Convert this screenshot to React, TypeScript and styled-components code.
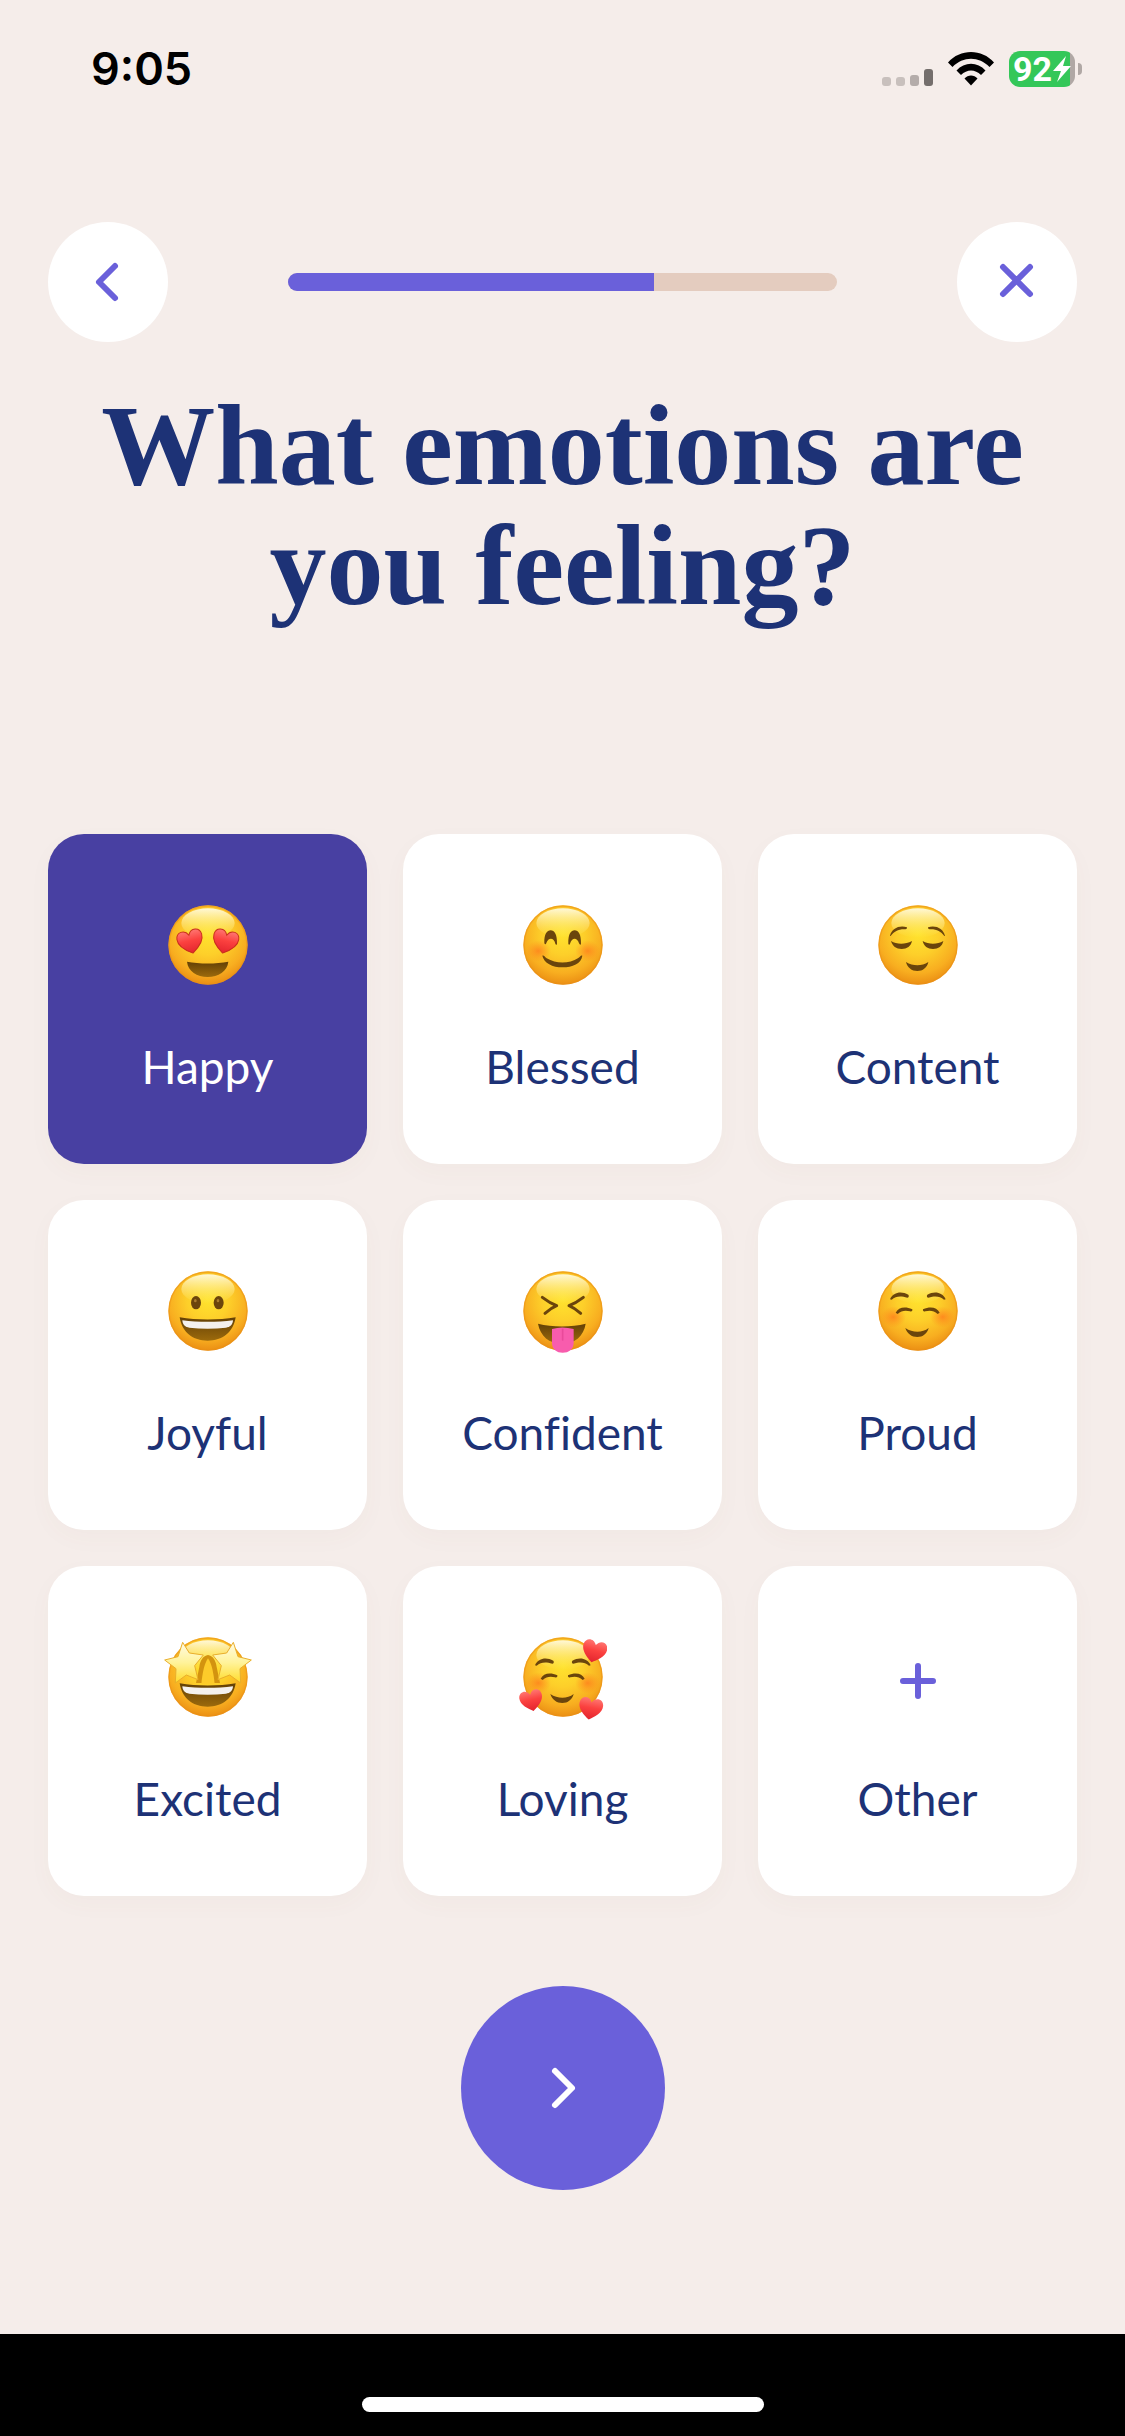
import React, { useState } from "react";
import styled, { createGlobalStyle } from "styled-components";

const color = {
  page: "#f5edea",
  card: "#ffffff",
  accent: "#6a60da",
  selected: "#4840a2",
  navy: "#1d3276",
  track: "#e4ccbf",
};

const GlobalStyle = createGlobalStyle`
  *, *::before, *::after { box-sizing: border-box; }
  body { margin: 0; background: ${color.page}; }
  button { border: 0; padding: 0; margin: 0; cursor: pointer; font: inherit; }
  svg { display: block; }
`;

const Screen = styled.div`
  display: flex;
  flex-direction: column;
  min-height: 100vh;
  background: ${color.page};
  color: ${color.navy};
  font-family: Lato, "Open Sans", sans-serif;
`;

const StatusBar = styled.header`
  display: flex;
  align-items: center;
  justify-content: space-between;
  height: 138px;
  padding: 0 43px 0 91px;
  color: #000;
`;

const Clock = styled.time`
  font-family: Inter, "Liberation Sans", sans-serif;
  font-size: 45px;
  font-weight: 600;
  line-height: 56px;
`;

const StatusIcons = styled.div`
  display: flex;
  align-items: center;
  gap: 15px;
`;

const Battery = styled.div`
  display: flex;
  align-items: center;
  gap: 3px;
`;

const BatteryBody = styled.div`
  display: flex;
  align-items: center;
  justify-content: center;
  gap: 1px;
  width: 66px;
  height: 36px;
  border-radius: 11px;
  background: linear-gradient(90deg, #34c759 61px, #b0a8a5 61px);
  color: #fff;
  font-family: Roboto, "Liberation Sans", sans-serif;
  font-size: 34px;
  font-weight: 700;
  line-height: 36px;
`;

const BatteryTip = styled.div`
  width: 4px;
  height: 12px;
  border-radius: 0 4px 4px 0;
  background: #b0a8a5;
`;

const Content = styled.main`
  display: flex;
  flex: 1;
  flex-direction: column;
  padding: 84px 48px 144px;
`;

const TopNav = styled.nav`
  display: flex;
  align-items: center;
  gap: 120px;
`;

const RoundButton = styled.button<{ $size: number; $primary?: boolean }>`
  display: flex;
  flex: none;
  align-items: center;
  justify-content: center;
  width: ${(p) => p.$size}px;
  height: ${(p) => p.$size}px;
  border-radius: 50%;
  background: ${(p) => (p.$primary ? color.accent : color.card)};
  color: ${(p) => (p.$primary ? "#fff" : color.accent)};
`;

const Track = styled.div`
  flex: 1;
  height: 18px;
  overflow: hidden;
  border-radius: 9px;
  background: ${color.track};
`;

const TrackFill = styled.div`
  height: 100%;
  background: ${color.accent};
`;

const Title = styled.h1`
  margin: 44px 0 208px;
  font-family: "Liberation Serif", "Times New Roman", serif;
  font-size: 114px;
  font-weight: 700;
  line-height: 120px;
  text-align: center;
`;

const Grid = styled.div`
  display: grid;
  grid-template-columns: repeat(3, 1fr);
  gap: 36px;
`;

const Card = styled.button<{ $selected: boolean }>`
  display: flex;
  flex-direction: column;
  align-items: center;
  gap: 50px;
  padding: 67px 0 69px;
  border-radius: 36px;
  background: ${(p) => (p.$selected ? color.selected : color.card)};
  color: ${(p) => (p.$selected ? "#fff" : color.navy)};
  box-shadow: 0 8px 24px rgba(120, 90, 60, 0.03);
`;

const CardLabel = styled.span`
  font-size: 46px;
  font-variant-ligatures: none;
  line-height: 56px;
`;

const Actions = styled.div`
  display: flex;
  justify-content: center;
  margin-top: 90px;
`;

const HomeArea = styled.footer`
  display: flex;
  align-items: flex-end;
  justify-content: center;
  height: 102px;
  padding-bottom: 24px;
  background: #000;
`;

const HomeIndicator = styled.div`
  width: 402px;
  height: 15px;
  border-radius: 8px;
  background: #fff;
`;

const BROWN = "#6b450c";

function Face({ id, children }: { id: string; children: React.ReactNode }) {
  return (
    <svg width="88" height="88" viewBox="72 66 264 264" aria-hidden="true">
      <defs>
        <radialGradient id={`${id}-skin`} cx="0.5" cy="0.36" r="0.66">
          <stop offset="0" stopColor="#ffe32e" />
          <stop offset="0.4" stopColor="#fdcf2a" />
          <stop offset="0.75" stopColor="#f8ae20" />
          <stop offset="1" stopColor="#e98a12" />
        </radialGradient>
        <linearGradient id={`${id}-shine`} x1="0" y1="0" x2="0" y2="1">
          <stop offset="0" stopColor="#fffbe0" stopOpacity="0.95" />
          <stop offset="1" stopColor="#fff27a" stopOpacity="0" />
        </linearGradient>
        <radialGradient id={`${id}-blush`}>
          <stop offset="0" stopColor="#ff7a1c" stopOpacity="0.75" />
          <stop offset="1" stopColor="#ff8a1c" stopOpacity="0" />
        </radialGradient>
        <linearGradient id={`${id}-heart`} x1="0" y1="0" x2="0" y2="1">
          <stop offset="0" stopColor="#ff7672" />
          <stop offset="0.45" stopColor="#fb413f" />
          <stop offset="1" stopColor="#e3242e" />
        </linearGradient>
        <linearGradient id={`${id}-mouth`} x1="0" y1="0" x2="0" y2="1">
          <stop offset="0" stopColor="#634006" />
          <stop offset="1" stopColor="#9c6a0c" />
        </linearGradient>
        <linearGradient id={`${id}-star`} x1="0" y1="0" x2="0" y2="1">
          <stop offset="0" stopColor="#fffbe6" />
          <stop offset="0.5" stopColor="#fff39a" />
          <stop offset="1" stopColor="#ffdb28" />
        </linearGradient>
      </defs>
      <circle cx="204" cy="198" r="119" fill={`url(#${id}-skin)`} />
      <circle cx="204" cy="198" r="117" fill="none" stroke="#e98f16" strokeWidth="4" strokeOpacity="0.55" />
      <ellipse cx="204" cy="132" rx="80" ry="44" fill={`url(#${id}-shine)`} />
      {children}
    </svg>
  );
}

const HEART = "M0 36 C-16 26 -40 8 -38 -14 C-36 -36 -10 -40 0 -19 C10 -40 36 -36 38 -14 C40 8 16 26 0 36Z";

function Heart({ id, x, y, rotate, scale = 1, edge }: { id: string; x: number; y: number; rotate: number; scale?: number; edge?: string }) {
  return (
    <path
      d={HEART}
      transform={`translate(${x} ${y}) rotate(${rotate}) scale(${scale})`}
      fill={`url(#${id}-heart)`}
      stroke={edge}
      strokeWidth="3"
    />
  );
}

function Blush({ id }: { id: string }) {
  return (
    <>
      <ellipse cx="130" cy="216" rx="38" ry="32" fill={`url(#${id}-blush)`} />
      <ellipse cx="278" cy="216" rx="38" ry="32" fill={`url(#${id}-blush)`} />
    </>
  );
}

function Grin({ id }: { id: string }) {
  return (
    <>
      <path d="M119 217 C170 226 236 226 287 217 C280 262 248 287 203 287 C158 287 126 262 119 217Z" fill={`url(#${id}-mouth)`} />
      <path d="M127 226 C174 232 232 232 279 226 C278 240 270 247 258 248 C222 252 184 252 148 248 C136 247 128 240 127 226Z" fill="#f4f1ee" />
    </>
  );
}

/* Raised brows, closed eyes and the small smile shared by the calm faces. */
function SoftSmile() {
  return (
    <g fill={BROWN}>
      <path d="M120 163 C130 141 154 138 175 149 C178 153 176 158 172 158 C150 151 137 154 125 164Z" />
      <path d="M287 163 C277 141 253 138 232 149 C229 153 231 158 235 158 C257 151 270 154 282 164Z" />
      <path d="M137 203 C145 187 165 183 187 193 C188 198 185 201 180 199 C164 195 154 198 143 207Z" />
      <path d="M269 203 C261 187 241 183 219 193 C218 198 221 201 226 199 C242 195 252 198 263 207Z" />
      <path d="M166 249 C188 264 217 264 236 249 C232 266 218 276 202 276 C185 276 171 266 166 249Z" />
    </g>
  );
}

const faces: Record<string, React.ReactNode> = {
  happy: (
    <Face id="happy">
      <Heart id="happy" x={151} y={187} rotate={-13} edge="#c9301d" />
      <Heart id="happy" x={256} y={187} rotate={13} edge="#c9301d" />
      <path d="M141 248 C178 255 228 255 265 248 C262 277 235 294 203 294 C171 294 144 277 141 248Z" fill="url(#happy-mouth)" />
    </Face>
  ),
  blessed: (
    <Face id="blessed">
      <Blush id="blessed" />
      <path d="M148 192 C147 165 156 154 167 154 C178 154 187 166 186 195 C185 199 182 198 181 194 C177 175 160 174 154 192 C153 197 149 197 148 192Z" fill={BROWN} />
      <path d="M220 194 C219 165 228 154 239 154 C250 154 259 166 258 195 C257 199 254 198 252 193 C247 175 231 174 225 194 C224 198 221 198 220 194Z" fill={BROWN} />
      <path d="M142 230 C147 228 150 234 155 238 C184 255 222 255 250 237 C255 233 258 227 262 230 C259 254 232 265 203 265 C172 265 147 252 142 230Z" fill={BROWN} />
    </Face>
  ),
  content: (
    <Face id="content">
      <g fill={BROWN}>
        <path d="M120 171 C125 148 148 138 171 145 C171 151 168 151 162 151 C144 151 132 158 122 171Z" />
        <path d="M285 171 C280 148 257 138 234 145 C234 151 237 151 243 151 C261 151 273 158 283 171Z" />
        <path d="M123 186 C140 197 166 197 186 186 C183 202 171 210 155 210 C139 210 127 201 123 186Z" />
        <path d="M218 186 C236 197 262 197 280 186 C277 202 265 210 249 210 C233 210 221 201 218 186Z" />
        <path d="M168 249 C189 262 215 262 235 249 C232 266 218 276 202 276 C185 276 172 266 168 249Z" />
      </g>
    </Face>
  ),
  joyful: (
    <Face id="joyful">
      <ellipse cx="168" cy="173" rx="15" ry="20" fill={BROWN} />
      <ellipse cx="236" cy="173" rx="15" ry="20" fill={BROWN} />
      <ellipse cx="166" cy="167" rx="4" ry="5" fill="#a97b2e" />
      <ellipse cx="234" cy="167" rx="4" ry="5" fill="#a97b2e" />
      <Grin id="joyful" />
    </Face>
  ),
  confident: (
    <Face id="confident">
      <g fill="none" stroke={BROWN} strokeWidth="9" strokeLinecap="round" strokeLinejoin="round">
        <path d="M142 157 Q164 174 185 182 Q168 189 150 205" />
        <path d="M265 157 Q243 174 222 182 Q239 189 257 205" />
      </g>
      <path d="M129 236 C172 247 230 247 272 236 C266 273 240 296 201 296 C162 296 136 273 129 236Z" fill="url(#confident-mouth)" />
      <path d="M171 252 Q201 243 236 252 V293 C236 313 221 323 203 323 C185 323 171 313 171 293Z" fill="#f85cad" />
      <path d="M203 253 V285" stroke="#e94a9b" strokeWidth="5" strokeLinecap="round" />
    </Face>
  ),
  proud: (
    <Face id="proud">
      <Blush id="proud" />
      <SoftSmile />
    </Face>
  ),
  excited: (
    <Face id="excited">
      <path d="M178 168 C180 148 190 134 204 132 C218 134 228 148 230 168 L240 216 H168Z" fill="#d3930f" />
      <path d="M204 142 C192 160 188 184 184 218 H224 C220 184 216 160 204 142Z" fill="#fdcb2a" />
      <g fill="url(#excited-star)" stroke="#e9ae2b" strokeWidth="3" strokeLinejoin="round">
        <path d="M128 94 L148 126 L190 132 L164 164 L174 206 L139 192 L106 216 L108 173 L74 147 L114 137Z" />
        <path d="M280 94 L260 126 L218 132 L244 164 L234 206 L269 192 L302 216 L300 173 L334 147 L294 137Z" />
      </g>
      <Grin id="excited" />
    </Face>
  ),
  loving: (
    <Face id="loving">
      <Blush id="loving" />
      <SoftSmile />
      <Heart id="loving" x={298} y={120} rotate={14} scale={0.96} />
      <Heart id="loving" x={109} y={268} rotate={-12} scale={0.9} />
      <Heart id="loving" x={287} y={292} rotate={10} scale={0.94} />
    </Face>
  ),
  other: (
    <svg width="88" height="88" viewBox="0 0 88 88" aria-hidden="true">
      <path d="M44 33V63M29 48H59" stroke={color.accent} strokeWidth="6" strokeLinecap="round" />
    </svg>
  ),
};

const emotions = [
  { id: "happy", label: "Happy" },
  { id: "blessed", label: "Blessed" },
  { id: "content", label: "Content" },
  { id: "joyful", label: "Joyful" },
  { id: "confident", label: "Confident" },
  { id: "proud", label: "Proud" },
  { id: "excited", label: "Excited" },
  { id: "loving", label: "Loving" },
  { id: "other", label: "Other" },
];

function SignalIcon() {
  return (
    <svg width="51" height="34" viewBox="0 0 51 34" aria-hidden="true">
      <rect x="0" y="25" width="9" height="9" rx="3" fill="#c8c0bd" />
      <rect x="14" y="25" width="9" height="9" rx="3" fill="#c8c0bd" />
      <rect x="28" y="23" width="9" height="11" rx="3" fill="#b4acaa" />
      <rect x="42" y="17" width="9" height="17" rx="3" fill="#746e6c" />
    </svg>
  );
}

function WifiIcon() {
  return (
    <svg width="46" height="34" viewBox="0 0 46 34" aria-hidden="true">
      <path d="M0 10.5C12-3.5 34-3.5 46 10.5L41.500 15C31 4 15 4 4.500 15Z" />
      <path d="M8.500 18.500C16.500 9.500 29.500 9.500 37.500 18.500L33 23C27 17 19 17 13 23Z" />
      <path d="M16.500 26.500C20 22.500 26 22.500 29.500 26.500L23 33.500Z" />
    </svg>
  );
}

function App() {
  const [selected, setSelected] = useState<string[]>(["happy"]);
  const step = 4;
  const steps = 6;

  const toggle = (id: string) =>
    setSelected((list) => (list.includes(id) ? list.filter((item) => item !== id) : [...list, id]));

  return (
    <Screen>
      <GlobalStyle />
      <StatusBar>
        <Clock>9:05</Clock>
        <StatusIcons>
          <SignalIcon />
          <WifiIcon />
          <Battery>
            <BatteryBody>
              92
              <svg width="18" height="26" viewBox="0 0 18 26" aria-hidden="true">
                <path d="M13 0L0 15H8L4 26L18 10H10Z" fill="#fff" />
              </svg>
            </BatteryBody>
            <BatteryTip />
          </Battery>
        </StatusIcons>
      </StatusBar>

      <Content>
        <TopNav>
          <RoundButton $size={120} type="button" aria-label="Back">
            <svg width="48" height="48" viewBox="0 0 48 48" fill="none" aria-hidden="true">
              <path d="M31 8L15 24L31 40" stroke="currentColor" strokeWidth="6" strokeLinecap="round" strokeLinejoin="round" />
            </svg>
          </RoundButton>
          <Track role="progressbar" aria-label="Progress" aria-valuemin={0} aria-valuemax={steps} aria-valuenow={step}>
            <TrackFill style={{ width: `${(step / steps) * 100}%` }} />
          </Track>
          <RoundButton $size={120} type="button" aria-label="Close">
            <svg width="48" height="48" viewBox="0 0 48 48" fill="none" aria-hidden="true">
              <path d="M10 9L37 36M37 9L10 36" stroke="currentColor" strokeWidth="6" strokeLinecap="round" />
            </svg>
          </RoundButton>
        </TopNav>

        <Title>What emotions are you feeling?</Title>

        <Grid>
          {emotions.map(({ id, label }) => (
            <Card
              key={id}
              type="button"
              $selected={selected.includes(id)}
              aria-pressed={selected.includes(id)}
              onClick={() => toggle(id)}
            >
              {faces[id]}
              <CardLabel>{label}</CardLabel>
            </Card>
          ))}
        </Grid>

        <Actions>
          <RoundButton $size={204} $primary type="button" aria-label="Next">
            <svg width="48" height="48" viewBox="0 0 48 48" fill="none" aria-hidden="true">
              <path d="M16 7L33 24L16 41" stroke="currentColor" strokeWidth="6" strokeLinecap="round" strokeLinejoin="round" />
            </svg>
          </RoundButton>
        </Actions>
      </Content>

      <HomeArea>
        <HomeIndicator />
      </HomeArea>
    </Screen>
  );
}

export default App;
